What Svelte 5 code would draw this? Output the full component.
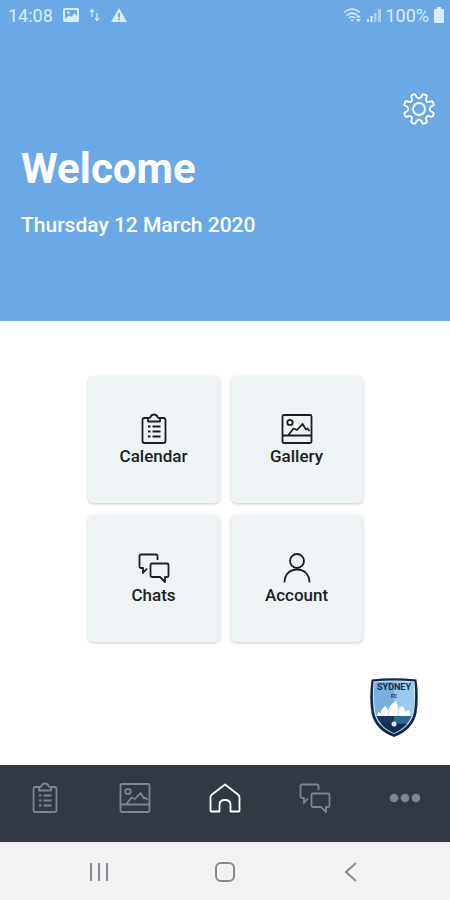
<script>
  let current = $state('home');

  const tiles = [
    { id: 'calendar', label: 'Calendar' },
    { id: 'gallery', label: 'Gallery' },
    { id: 'chats', label: 'Chats' },
    { id: 'account', label: 'Account' },
  ];

  const tabs = [
    { id: 'calendar', label: 'Calendar' },
    { id: 'gallery', label: 'Gallery' },
    { id: 'home', label: 'Home' },
    { id: 'chats', label: 'Chats' },
    { id: 'more', label: 'More' },
  ];
</script>

{#snippet icon(name)}
  <svg class="icon" viewBox="0 0 32 32" aria-hidden="true">
    {#if name === 'calendar'}
      <path d="M11 5H6.500q-2 0-2 2v21q0 2 2 2h19q2 0 2-2V7q0-2-2-2H21q-1 0-1.500-1.200Q18.500 1.500 16 1.500t-3.500 2.300Q12 5 11 5zM10 5v3.500h12V5" />
      <path stroke-width="2" d="M10 13.500h2.500M14.500 13.500h8M10 18.500h2.500M14.500 18.500h8M10 23.500h2.500M14.500 23.500h8" />
    {:else if name === 'gallery'}
      <rect x="1.500" y="2" width="29" height="28" rx="1.500" />
      <path d="M2 22.500h28M7 22.500l5.500-7 3.500 1.500 5.500-6 3.500 5.500 1.500-1 2 2.500" />
      <circle cx="9" cy="9.500" r="2.700" />
    {:else if name === 'chats'}
      <path d="M19.500 8V4q0-1.500-1.500-1.500H3Q1.500 2.500 1.500 4v10.500Q1.500 16 3 16h2v5l4-4.500" />
      <path d="M14 11.500h15q1.500 0 1.500 1.500v10.500q0 1.500-1.500 1.500h-2v5l-5-5h-8q-1.500 0-1.500-1.500V13q0-1.500 1.500-1.500z" />
    {:else if name === 'account'}
      <circle cx="16" cy="9" r="7" />
      <path d="M3.500 30.500C3.500 22 9 17.500 16 17.500S28.500 22 28.500 30.500" />
    {:else if name === 'home'}
      <path d="M16 2.500 3 12.500q-1.500 1.200-1.500 3V28.500q0 1 1 1h8v-6.500q0-5 5.500-5t5.500 5v6.500h8q1 0 1-1V15.500q0-1.800-1.500-3z" />
    {:else if name === 'more'}
      <g class="dots">
        <circle cx="5" cy="16" r="4.300" />
        <circle cx="16" cy="16" r="4.300" />
        <circle cx="27" cy="16" r="4.300" />
      </g>
    {/if}
  </svg>
{/snippet}

<div class="app">
  <header>
    <div class="status-bar">
      <span>14:08</span>
      <svg class="status-picture" viewBox="0 0 16 14" aria-hidden="true">
        <path fill-rule="evenodd" d="M1.500 0h13Q16 0 16 1.500v11q0 1.500-1.500 1.500h-13Q0 14 0 12.500v-11Q0 0 1.500 0zM2 2v9l4-3.500 2 1.500 3.500-4L14 8V2zM4 3.500h2.500v2H4z" />
      </svg>
      <svg class="status-arrows" viewBox="0 0 12 14" aria-hidden="true">
        <path d="M3 9V2M1 4l2-2.500L5 4M8 5v7M6 10l2 2.500L10 10" />
      </svg>
      <svg class="status-warning" viewBox="0 0 16 14" aria-hidden="true">
        <path fill-rule="evenodd" d="M8 0l8 14H0zM7 5v4.500h2V5zM7 10.500v1.800h2v-1.800z" />
      </svg>
      <span class="spacer"></span>
      <svg class="status-wifi" viewBox="0 0 20 16" aria-hidden="true">
        <path class="line" d="M1 5.500q8-7 16 0M3.500 8.500q5.500-4.600 11 0M6 11q3-2.400 6 0" />
        <path d="M7 12.500h4l-2 2zM13 10.500h5l-2.500-2.500zM13 12h5l-2.500 3z" />
      </svg>
      <svg class="status-signal" viewBox="0 0 16 16" aria-hidden="true">
        <path d="M1 12h2v3H1zM4.500 9h2v6h-2z" />
        <path opacity="0.600" d="M8 6h2.500v9H8zM12 2h3v13h-3z" />
      </svg>
      <span>100%</span>
      <svg class="status-battery" viewBox="0 0 10 16" aria-hidden="true">
        <path d="M3 0h4v2h2q1 0 1 1v12q0 1-1 1H1q-1 0-1-1V3q0-1 1-1h2z" />
      </svg>
    </div>

    <button class="settings" aria-label="Settings">
      <svg viewBox="-16 -16 32 32" aria-hidden="true">
        <path d="M-2.200-11.800Q0-9.400 2.200-11.800L3.500-14.200Q4-15 5-14.600L7-13.800Q8-13.400 7.800-12.400L7.200-10.400Q6.600-6.600 10.400-7.200L12.400-7.800Q13.400-8 13.800-7L14.600-5Q15-4 14.200-3.500L11.800-2.200Q9.400 0 11.800 2.200L14.200 3.500Q15 4 14.600 5L13.800 7Q13.400 8 12.400 7.800L10.400 7.200Q6.600 6.600 7.200 10.400L7.800 12.400Q8 13.400 7 13.800L5 14.600Q4 15 3.500 14.200L2.200 11.800Q0 9.400-2.200 11.800L-3.500 14.200Q-4 15-5 14.600L-7 13.800Q-8 13.400-7.800 12.400L-7.200 10.400Q-6.600 6.600-10.400 7.200L-12.400 7.800Q-13.400 8-13.800 7L-14.600 5Q-15 4-14.200 3.500L-11.800 2.200Q-9.400 0-11.800-2.200L-14.200-3.500Q-15-4-14.600-5L-13.800-7Q-13.400-8-12.400-7.800L-10.400-7.200Q-6.600-6.600-7.200-10.400L-7.800-12.400Q-8-13.400-7-13.800L-5-14.600Q-4-15-3.500-14.200Z" />
        <circle r="6" />
      </svg>
    </button>

    <div class="greeting">
      <h1>Welcome</h1>
      <p>Thursday 12 March 2020</p>
    </div>
  </header>

  <main>
    <div class="tiles">
      {#each tiles as tile}
        <button class="tile" onclick={() => (current = tile.id)}>
          {@render icon(tile.id)}
          <span>{tile.label}</span>
        </button>
      {/each}
    </div>

    <svg class="crest" viewBox="0 0 48 60" role="img" aria-label="Sydney FC">
      <defs>
        <clipPath id="shield">
          <path d="M4.500 4.500Q24 2.500 43.500 4.500Q45 20 43 33Q40 48 24 55Q8 48 5 33Q3 20 4.500 4.500Z" />
        </clipPath>
      </defs>
      <path fill="#12284a" d="M1.500 1.500Q24-1 46.500 1.500Q49 20 46.500 35Q43 52 24 59Q5 52 1.500 35Q-1 20 1.500 1.500Z" />
      <path fill="#d5e5f0" d="M3.500 3.500Q24 1.500 44.500 3.500Q46 20 44 34Q41 49 24 56Q7 49 4 34Q2 20 3.500 3.500Z" />
      <g clip-path="url(#shield)">
        <path fill="#76b1de" d="M0 0h48v60H0z" />
        <path fill="#9acaec" d="M24 0h24v40H24z" />
        <path fill="#14365f" d="M0 38h24v22H0z" />
        <path fill="#2c6796" d="M24 38h24v22H24z" />
        <path fill="#102d52" d="M0 47q24-3 48 0v13H0z" />
        <path fill="#ffffff" d="M7 38l1.500-4 2 1q1-5 5-7 2.500 2.500 2.500 5 2-7 8-10 2.500 5 1.500 9 1.500-3 5-4 3 3 2.500 6 2-2 4-2 1.500 3 1.500 6z" />
        <path fill="none" stroke="#a7c7df" stroke-width="0.700" d="M18 37q1-5 3-7M28 37q0-4 2-6" />
        <circle cx="24" cy="46" r="2.500" fill="#e3f0f8" />
      </g>
      <text x="24" y="12" font-size="9">SYDNEY</text>
      <text x="24" y="20" font-size="5">FC</text>
    </svg>
  </main>

  <nav class="tabs" aria-label="Main">
    {#each tabs as tab}
      <button class:active={current === tab.id} aria-label={tab.label} onclick={() => (current = tab.id)}>
        {@render icon(tab.id)}
      </button>
    {/each}
  </nav>

  <nav class="system" aria-label="System">
    <button aria-label="Recent apps">
      <svg viewBox="0 0 24 24" aria-hidden="true"><path d="M4 3v18M12 3v18M20 3v18" /></svg>
    </button>
    <button aria-label="Device home">
      <svg viewBox="0 0 24 24" aria-hidden="true"><rect x="3" y="3" width="18" height="18" rx="5" /></svg>
    </button>
    <button aria-label="Back">
      <svg viewBox="0 0 24 24" aria-hidden="true"><path d="M17 3 7 12l10 9" /></svg>
    </button>
  </nav>
</div>

<style>
  :global(body) {
    margin: 0;
  }

  .app {
    display: flex;
    flex-direction: column;
    min-height: 100vh;
    background-color: #ffffff;
    font-family: Roboto, sans-serif;
  }

  button {
    padding: 0;
    border: none;
    background: none;
    color: inherit;
    font: inherit;
    cursor: pointer;
  }

  svg {
    display: block;
    flex-shrink: 0;
  }

  header {
    display: flex;
    flex-direction: column;
    padding-bottom: 84px;
    background-color: #6aa9e5;
    color: #ffffff;
  }

  .status-bar {
    display: flex;
    align-items: center;
    height: 30px;
    padding: 0 6px 0 8px;
    color: #d9edfc;
    font-size: 18px;
  }

  .status-bar svg {
    fill: #d9edfc;
  }

  .spacer {
    flex: 1;
  }

  .status-picture {
    width: 16px;
    margin-left: 10px;
  }

  .status-bar .status-arrows {
    width: 12px;
    margin-left: 10px;
    fill: none;
    stroke: #d9edfc;
    stroke-width: 1.2;
  }

  .status-warning {
    width: 16px;
    margin-left: 10px;
  }

  .status-wifi {
    width: 20px;
    margin-right: 3px;
  }

  .status-wifi .line {
    fill: none;
    stroke: #d9edfc;
    stroke-width: 1.6;
  }

  .status-signal {
    width: 16px;
    margin-right: 3px;
  }

  .status-battery {
    width: 10px;
    margin-left: 5px;
  }

  .settings {
    align-self: flex-end;
    margin: 63px 15px 0 0;
  }

  .settings svg {
    width: 32px;
    fill: none;
    stroke: #ffffff;
    stroke-width: 1.8;
    stroke-linejoin: round;
  }

  .greeting {
    padding: 20px 21px 0;
  }

  h1 {
    margin: 0;
    font-size: 42px;
    font-weight: 700;
    line-height: 48px;
  }

  p {
    margin: 20px 0 0;
    font-size: 21px;
    font-weight: 500;
    line-height: 24px;
  }

  main {
    display: flex;
    flex: 1;
    flex-direction: column;
    padding: 55px 32px 27px;
  }

  .tiles {
    display: grid;
    grid-template-columns: repeat(2, 132px);
    justify-content: center;
    gap: 12px 11px;
  }

  .tile {
    display: flex;
    flex-direction: column;
    align-items: center;
    justify-content: center;
    height: 127px;
    border-radius: 5px;
    background-color: #eff4f6;
    box-shadow: 0 1px 3px rgba(0, 0, 0, 0.2);
    color: #1b1f23;
    font-size: 17px;
    font-weight: 500;
    line-height: 22px;
  }

  .icon {
    width: 32px;
    height: 32px;
    fill: none;
    stroke: currentColor;
    stroke-width: 1.8;
    stroke-linejoin: round;
  }

  .dots {
    fill: currentColor;
    stroke: none;
  }

  .crest {
    align-self: flex-end;
    width: 48px;
    margin-top: auto;
  }

  .crest text {
    fill: #12284a;
    font-weight: 700;
    text-anchor: middle;
  }

  .tabs {
    display: grid;
    grid-template-columns: repeat(5, 1fr);
    height: 76px;
    padding-bottom: 1px;
    background-color: #313943;
    color: #7f868f;
  }

  .tabs button {
    display: flex;
    justify-content: center;
    padding-top: 17px;
  }

  .tabs .active {
    color: #ffffff;
  }

  .system {
    display: grid;
    grid-template-columns: repeat(3, 1fr);
    height: 58px;
    padding: 0 36px;
    background-color: #f1f2f4;
  }

  .system button {
    display: flex;
    align-items: center;
    justify-content: center;
    padding-top: 2px;
  }

  .system svg {
    width: 24px;
    fill: none;
    stroke: #85878a;
    stroke-width: 2;
  }
</style>
